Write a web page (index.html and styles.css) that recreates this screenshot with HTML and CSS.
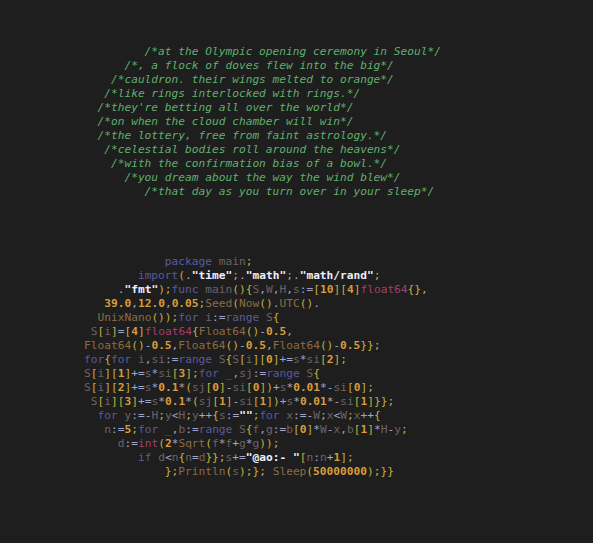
FILE: index.html
```html
<!DOCTYPE html>
<html>
<head>
<meta charset="utf-8">
<link rel="stylesheet" href="styles.css">
</head>
<body>
<pre class="code"><span class="c">         /*at the Olympic opening ceremony in Seoul*/</span>
<span class="c">      /*, a flock of doves flew into the big*/</span>
<span class="c">    /*cauldron. their wings melted to orange*/</span>
<span class="c">   /*like rings interlocked with rings.*/</span>
<span class="c">  /*they're betting all over the world*/</span>
<span class="c">  /*on when the cloud chamber will win*/</span>
<span class="c">  /*the lottery, free from faint astrology.*/</span>
<span class="c">   /*celestial bodies roll around the heavens*/</span>
<span class="c">    /*with the confirmation bias of a bowl.*/</span>
<span class="c">      /*you dream about the way the wind blew*/</span>
<span class="c">         /*that day as you turn over in your sleep*/</span>




            <span class="k">package</span> <span class="v">main</span><span class="p">;</span>
        <span class="k">import</span><span class="p">(</span><span class="o">.</span><span class="s">"time"</span><span class="p">;</span><span class="o">.</span><span class="s">"math"</span><span class="p">;</span><span class="o">.</span><span class="s">"math/rand"</span><span class="p">;</span>
     <span class="o">.</span><span class="s">"fmt"</span><span class="p">);</span><span class="k">func</span> <span class="v">main</span><span class="p">(){</span><span class="v">S</span><span class="o">,</span><span class="v">W</span><span class="o">,</span><span class="v">H</span><span class="o">,</span><span class="v">s</span><span class="o">:=</span><span class="p">[</span><span class="n">10</span><span class="p">][</span><span class="n">4</span><span class="p">]</span><span class="t">float64</span><span class="p">{},</span>
   <span class="n">39.0</span><span class="o">,</span><span class="n">12.0</span><span class="o">,</span><span class="n">0.05</span><span class="p">;</span><span class="f">Seed</span><span class="p">(</span><span class="f">Now</span><span class="p">()</span><span class="o">.</span><span class="f">UTC</span><span class="p">()</span><span class="o">.</span>
  <span class="f">UnixNano</span><span class="p">());</span><span class="k">for</span> <span class="v">i</span><span class="o">:=</span><span class="k">range</span> <span class="v">S</span><span class="p">{</span>
 <span class="v">S</span><span class="p">[</span><span class="v">i</span><span class="p">]</span><span class="o">=</span><span class="p">[</span><span class="n">4</span><span class="p">]</span><span class="t">float64</span><span class="p">{</span><span class="f">Float64</span><span class="p">()</span><span class="o">-</span><span class="n">0.5</span><span class="o">,</span>
<span class="f">Float64</span><span class="p">()</span><span class="o">-</span><span class="n">0.5</span><span class="o">,</span><span class="f">Float64</span><span class="p">()</span><span class="o">-</span><span class="n">0.5</span><span class="o">,</span><span class="f">Float64</span><span class="p">()</span><span class="o">-</span><span class="n">0.5</span><span class="p">}};</span>
<span class="k">for</span><span class="p">{</span><span class="k">for</span> <span class="v">i</span><span class="o">,</span><span class="v">si</span><span class="o">:=</span><span class="k">range</span> <span class="v">S</span><span class="p">{</span><span class="v">S</span><span class="p">[</span><span class="v">i</span><span class="p">][</span><span class="n">0</span><span class="p">]</span><span class="o">+=</span><span class="v">s</span><span class="o">*</span><span class="v">si</span><span class="p">[</span><span class="n">2</span><span class="p">];</span>
<span class="v">S</span><span class="p">[</span><span class="v">i</span><span class="p">][</span><span class="n">1</span><span class="p">]</span><span class="o">+=</span><span class="v">s</span><span class="o">*</span><span class="v">si</span><span class="p">[</span><span class="n">3</span><span class="p">];</span><span class="k">for</span> <span class="v">_</span><span class="o">,</span><span class="v">sj</span><span class="o">:=</span><span class="k">range</span> <span class="v">S</span><span class="p">{</span>
<span class="v">S</span><span class="p">[</span><span class="v">i</span><span class="p">][</span><span class="n">2</span><span class="p">]</span><span class="o">+=</span><span class="v">s</span><span class="o">*</span><span class="n">0.1</span><span class="o">*</span><span class="p">(</span><span class="v">sj</span><span class="p">[</span><span class="n">0</span><span class="p">]</span><span class="o">-</span><span class="v">si</span><span class="p">[</span><span class="n">0</span><span class="p">])</span><span class="o">+</span><span class="v">s</span><span class="o">*</span><span class="n">0.01</span><span class="o">*-</span><span class="v">si</span><span class="p">[</span><span class="n">0</span><span class="p">];</span>
 <span class="v">S</span><span class="p">[</span><span class="v">i</span><span class="p">][</span><span class="n">3</span><span class="p">]</span><span class="o">+=</span><span class="v">s</span><span class="o">*</span><span class="n">0.1</span><span class="o">*</span><span class="p">(</span><span class="v">sj</span><span class="p">[</span><span class="n">1</span><span class="p">]</span><span class="o">-</span><span class="v">si</span><span class="p">[</span><span class="n">1</span><span class="p">])</span><span class="o">+</span><span class="v">s</span><span class="o">*</span><span class="n">0.01</span><span class="o">*-</span><span class="v">si</span><span class="p">[</span><span class="n">1</span><span class="p">]}};</span>
  <span class="k">for</span> <span class="v">y</span><span class="o">:=-</span><span class="v">H</span><span class="p">;</span><span class="v">y</span><span class="o">&lt;</span><span class="v">H</span><span class="p">;</span><span class="v">y</span><span class="o">++</span><span class="p">{</span><span class="v">s</span><span class="o">:=</span><span class="s">""</span><span class="p">;</span><span class="k">for</span> <span class="v">x</span><span class="o">:=-</span><span class="v">W</span><span class="p">;</span><span class="v">x</span><span class="o">&lt;</span><span class="v">W</span><span class="p">;</span><span class="v">x</span><span class="o">++</span><span class="p">{</span>
   <span class="v">n</span><span class="o">:=</span><span class="n">5</span><span class="p">;</span><span class="k">for</span> <span class="v">_</span><span class="o">,</span><span class="v">b</span><span class="o">:=</span><span class="k">range</span> <span class="v">S</span><span class="p">{</span><span class="v">f</span><span class="o">,</span><span class="v">g</span><span class="o">:=</span><span class="v">b</span><span class="p">[</span><span class="n">0</span><span class="p">]</span><span class="o">*</span><span class="v">W</span><span class="o">-</span><span class="v">x</span><span class="o">,</span><span class="v">b</span><span class="p">[</span><span class="n">1</span><span class="p">]</span><span class="o">*</span><span class="v">H</span><span class="o">-</span><span class="v">y</span><span class="p">;</span>
     <span class="v">d</span><span class="o">:=</span><span class="t">int</span><span class="p">(</span><span class="n">2</span><span class="o">*</span><span class="f">Sqrt</span><span class="p">(</span><span class="v">f</span><span class="o">*</span><span class="v">f</span><span class="o">+</span><span class="v">g</span><span class="o">*</span><span class="v">g</span><span class="p">));</span>
        <span class="k">if</span> <span class="v">d</span><span class="o">&lt;</span><span class="v">n</span><span class="p">{</span><span class="v">n</span><span class="o">=</span><span class="v">d</span><span class="p">}};</span><span class="v">s</span><span class="o">+=</span><span class="s">"@ao:- "</span><span class="p">[</span><span class="v">n</span><span class="o">:</span><span class="v">n</span><span class="o">+</span><span class="n">1</span><span class="p">];</span>
            <span class="p">};</span><span class="f">Println</span><span class="p">(</span><span class="v">s</span><span class="p">);};</span> <span class="f">Sleep</span><span class="p">(</span><span class="n">50000000</span><span class="p">);}}</span></pre>
</body>
</html>
```
FILE: styles.css
```css
html, body {
  margin: 0;
  padding: 0;
  background: #1e1e1e;
  height: 100%;
}
.code {
  margin: 0;
  padding: 45px 0 0 84px;
  font-family: "DejaVu Sans Mono", "Liberation Mono", monospace;
  font-size: 11.2px;
  line-height: 14px;
  color: #9a9ab8;
  white-space: pre;
}
.c { color: #5fb06c; font-style: italic; }
.k { color: #5a5aa0; }
.v { color: #6e6266; }
.p { color: #c2b040; }
.o { color: #a4a4c4; }
.s { color: #eeeeff; font-weight: bold; }
.n { color: #d89c3c; font-weight: bold; }
.t { color: #a2406a; }
.f { color: #8c6c44; }
```
